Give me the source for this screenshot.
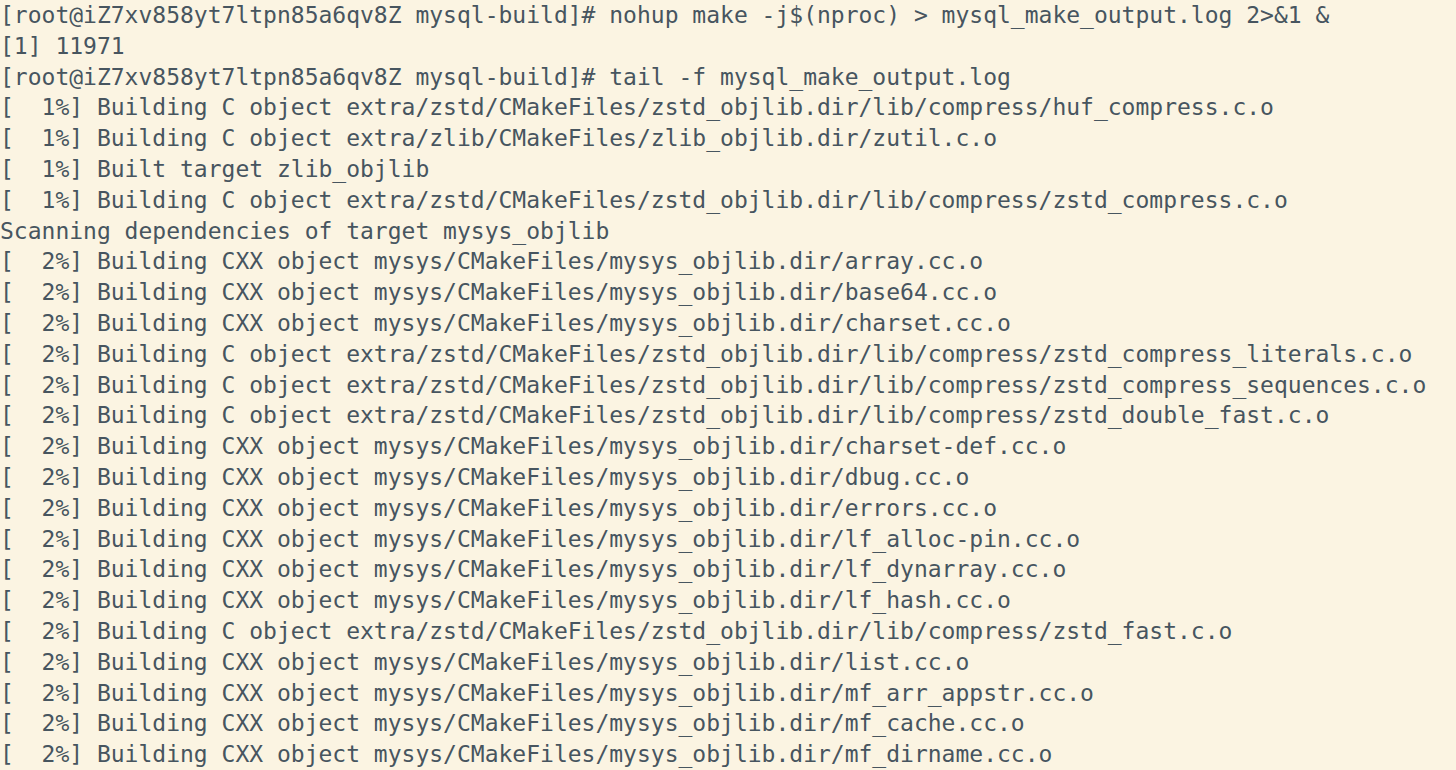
const lines = [
  '[root@iZ7xv858yt7ltpn85a6qv8Z mysql-build]# nohup make -j$(nproc) > mysql_make_output.log 2>&1 &',
  '[1] 11971',
  '[root@iZ7xv858yt7ltpn85a6qv8Z mysql-build]# tail -f mysql_make_output.log',
  '[  1%] Building C object extra/zstd/CMakeFiles/zstd_objlib.dir/lib/compress/huf_compress.c.o',
  '[  1%] Building C object extra/zlib/CMakeFiles/zlib_objlib.dir/zutil.c.o',
  '[  1%] Built target zlib_objlib',
  '[  1%] Building C object extra/zstd/CMakeFiles/zstd_objlib.dir/lib/compress/zstd_compress.c.o',
  'Scanning dependencies of target mysys_objlib',
  '[  2%] Building CXX object mysys/CMakeFiles/mysys_objlib.dir/array.cc.o',
  '[  2%] Building CXX object mysys/CMakeFiles/mysys_objlib.dir/base64.cc.o',
  '[  2%] Building CXX object mysys/CMakeFiles/mysys_objlib.dir/charset.cc.o',
  '[  2%] Building C object extra/zstd/CMakeFiles/zstd_objlib.dir/lib/compress/zstd_compress_literals.c.o',
  '[  2%] Building C object extra/zstd/CMakeFiles/zstd_objlib.dir/lib/compress/zstd_compress_sequences.c.o',
  '[  2%] Building C object extra/zstd/CMakeFiles/zstd_objlib.dir/lib/compress/zstd_double_fast.c.o',
  '[  2%] Building CXX object mysys/CMakeFiles/mysys_objlib.dir/charset-def.cc.o',
  '[  2%] Building CXX object mysys/CMakeFiles/mysys_objlib.dir/dbug.cc.o',
  '[  2%] Building CXX object mysys/CMakeFiles/mysys_objlib.dir/errors.cc.o',
  '[  2%] Building CXX object mysys/CMakeFiles/mysys_objlib.dir/lf_alloc-pin.cc.o',
  '[  2%] Building CXX object mysys/CMakeFiles/mysys_objlib.dir/lf_dynarray.cc.o',
  '[  2%] Building CXX object mysys/CMakeFiles/mysys_objlib.dir/lf_hash.cc.o',
  '[  2%] Building C object extra/zstd/CMakeFiles/zstd_objlib.dir/lib/compress/zstd_fast.c.o',
  '[  2%] Building CXX object mysys/CMakeFiles/mysys_objlib.dir/list.cc.o',
  '[  2%] Building CXX object mysys/CMakeFiles/mysys_objlib.dir/mf_arr_appstr.cc.o',
  '[  2%] Building CXX object mysys/CMakeFiles/mysys_objlib.dir/mf_cache.cc.o',
  '[  2%] Building CXX object mysys/CMakeFiles/mysys_objlib.dir/mf_dirname.cc.o',
];

export default function App() {
  return (
    <div className="w-[1456px] h-[770px] overflow-hidden bg-[#fbf4e2] text-[#47555f] font-['DejaVu_Sans_Mono',monospace] text-[23px] leading-[30.8px]">
      {lines.map((line, i) => (
        <div key={i} className="whitespace-pre">
          {line}
        </div>
      ))}
    </div>
  );
}
